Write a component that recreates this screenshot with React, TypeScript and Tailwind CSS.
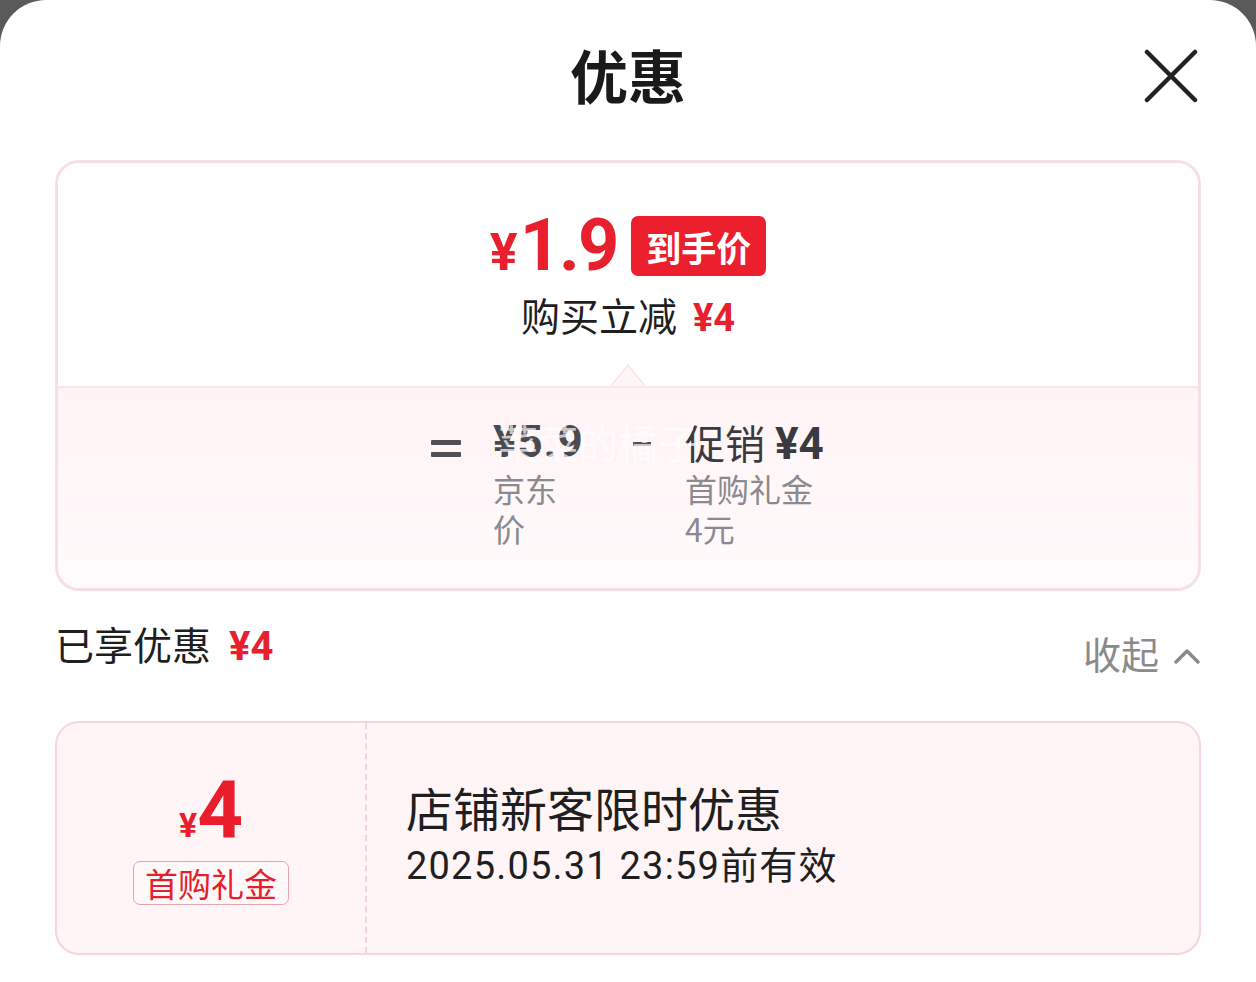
import React from "react";

const cjk = { fontFamily: "'Noto Sans CJK SC', 'Noto Sans', sans-serif" };
const num = { fontFamily: "Roboto, 'Noto Sans CJK SC', sans-serif" };

export default function App() {
  return (
    <div className="w-[1256px] h-[982px] bg-[#5a5a5a] overflow-hidden" style={cjk}>
      <div className="h-full bg-white rounded-t-[46px] px-[55px]">
        {/* header */}
        <div className="relative h-[160px] flex items-start justify-center pt-[38px]">
          <div className="text-[58px] leading-[72px] font-bold text-[#1a1a1a]">优惠</div>
          <svg className="absolute right-[3px] top-[49px]" width="54" height="54" viewBox="0 0 54 54">
            <path d="M3 3 L51 51 M51 3 L3 51" stroke="#222" strokeWidth="4.5" strokeLinecap="round" />
          </svg>
        </div>

        {/* summary card */}
        <div className="h-[431px] border-[3px] border-[#f6dfe4] rounded-[24px] overflow-hidden flex flex-col">
          <div className="relative h-[223px] bg-white flex flex-col items-center pt-[52px]">
            <div className="flex items-center h-[62px]">
              <div className="flex items-baseline text-[#e8202e] font-bold" style={num}>
                <span className="text-[52px] leading-none">¥</span>
                <span className="text-[72px] leading-none tracking-[-2px] ml-[2px]">1.9</span>
              </div>
              <div className="ml-[14px] h-[60px] px-[15px] bg-[#ec1f2e] rounded-[7px] flex items-center text-white font-bold text-[35px] leading-none">
                到手价
              </div>
            </div>
            <div className="mt-[14px] flex items-baseline text-[39px] leading-[46px] text-[#1f1f1f]">
              <span>购买立减</span>
              <span className="ml-[16px] text-[#e8202e] font-bold text-[38px]" style={num}>¥4</span>
            </div>
            <svg className="absolute left-1/2 -translate-x-1/2 bottom-[-1px]" width="38" height="24" viewBox="0 0 38 24">
              <path d="M1 24 L19 2 L37 24 Z" fill="#fff4f6" stroke="#fbe3e8" strokeWidth="1.5" />
            </svg>
          </div>
          <div className="relative flex-1 border-t-[2px] border-[#fbe6ea] bg-gradient-to-b from-[#fff3f5] to-[#fffbfc] flex justify-center pt-[28px]">
            <div className="flex items-start">
              <div className="w-[30px] mt-[24px] flex flex-col gap-[7px] mr-[32px]">
                <div className="h-[5px] bg-[#4f4f55] rounded-[1px]" />
                <div className="h-[5px] bg-[#4f4f55] rounded-[1px]" />
              </div>
              <div className="relative w-[100px]">
                <div className="text-[44px] leading-[52px] font-bold text-[#4a4a50] whitespace-nowrap tracking-[1px]" style={num}>¥5.9</div>
                <div className="w-[80px] text-[32px] leading-[40px] text-[#8a8a90]">京东价</div>
              </div>
              <div className="w-[18px] h-[4px] bg-[#4f4f55] mt-[26px] ml-[40px] mr-[34px]" />
              <div className="relative">
                <div className="flex items-baseline text-[#3a3a40] whitespace-nowrap h-[52px]">
                  <span className="text-[40px] leading-[52px]">促销</span>
                  <span className="ml-[10px] text-[44px] font-bold leading-[52px]" style={num}>¥4</span>
                </div>
                <div className="w-[140px] text-[32px] leading-[40px] text-[#8a8a90]">首购礼金4元</div>
              </div>
            </div>
            {/* watermark */}
            <div className="absolute left-[440px] top-[34px] text-[40px] leading-[40px] text-white/70 whitespace-nowrap pointer-events-none">
              菜菜的橘子
            </div>
          </div>
        </div>

        {/* enjoyed row */}
        <div className="h-[130px] flex items-start justify-between pt-[24px]">
          <div className="flex items-baseline text-[39px] leading-[56px] text-[#1f1f1f]">
            <span>已享优惠</span>
            <span className="ml-[18px] text-[#e8202e] font-bold text-[40px]" style={num}>¥4</span>
          </div>
          <div className="flex items-center mt-[10px] text-[#8a8a8a]">
            <span className="text-[38px] leading-[56px]">收起</span>
            <svg className="ml-[14px] mt-[6px]" width="28" height="18" viewBox="0 0 28 18">
              <path d="M3 15 L14 4 L25 15" fill="none" stroke="#8a8a8a" strokeWidth="3.5" strokeLinecap="round" strokeLinejoin="round" />
            </svg>
          </div>
        </div>

        {/* coupon card */}
        <div className="h-[234px] border-[2px] border-[#f4d6dc] rounded-[24px] bg-[#fff5f6] flex">
          <div className="w-[310px] flex flex-col items-center justify-center border-r-[2px] border-dashed border-[#f1d3d9]">
            <div className="flex items-baseline text-[#ea1d2c] font-bold mt-[4px]" style={num}>
              <span className="text-[34px] leading-none">¥</span>
              <span className="text-[80px] leading-[70px]">4</span>
            </div>
            <div className="mt-[16px] h-[44px] px-[11px] border border-[#e6a4ad] rounded-[7px] bg-[#fff8f9] flex items-center text-[#e3202d] text-[33px] leading-none">
              首购礼金
            </div>
          </div>
          <div className="flex-1 flex flex-col justify-center pl-[39px] pb-[6px]">
            <div className="text-[47px] leading-[56px] text-[#1f1f1f]">店铺新客限时优惠</div>
            <div className="text-[38px] leading-[52px] text-[#1f1f1f] mt-[2px] tracking-[1.2px]" style={num}>
              2025.05.31 23:59<span style={cjk}>前有效</span>
            </div>
          </div>
        </div>
      </div>
    </div>
  );
}
